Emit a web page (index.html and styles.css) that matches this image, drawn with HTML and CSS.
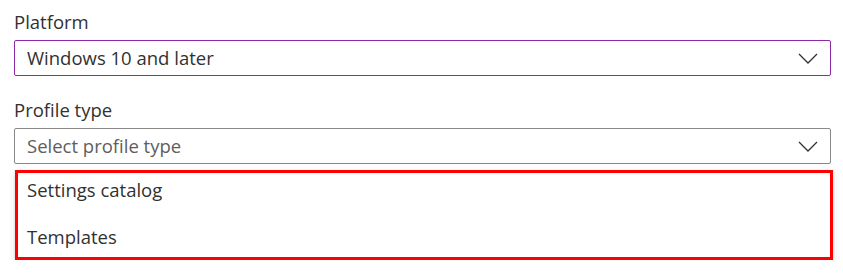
FILE: index.html
```html
<!DOCTYPE html>
<html lang="en">
<head>
<meta charset="utf-8">
<title>Profile</title>
<link rel="stylesheet" href="styles.css">
</head>
<body>
<div class="form">
  <div class="field">
    <div class="label">Platform</div>
    <div class="select select-focused">
      <span class="value">Windows 10 and later</span>
      <svg class="chevron" width="20" height="11" viewBox="0 0 20 11"><path d="M1 1 L10 10 L19 1" fill="none" stroke="#323130" stroke-width="1.3"/></svg>
    </div>
  </div>
  <div class="field field-second">
    <div class="label">Profile type</div>
    <div class="select">
      <span class="value placeholder">Select profile type</span>
      <svg class="chevron" width="20" height="11" viewBox="0 0 20 11"><path d="M1 1 L10 10 L19 1" fill="none" stroke="#323130" stroke-width="1.3"/></svg>
    </div>
    <div class="menu">
      <div class="item">Settings catalog</div>
      <div class="item">Templates</div>
    </div>
  </div>
</div>
</body>
</html>
```
FILE: styles.css
```css
html, body {
  margin: 0;
  padding: 0;
  background: #ffffff;
}
body {
  font-family: "Open Sans", "Noto Sans", sans-serif;
  font-size: 18.5px;
  color: #323130;
}
.form {
  padding: 8px 12px 0 14px;
  width: 817px;
}
.label {
  line-height: 28px;
  height: 28px;
  margin-bottom: 4px;
  color: #323130;
}
.field-second {
  margin-top: 20px;
}
.select {
  box-sizing: border-box;
  height: 36px;
  border: 1px solid #8a8886;
  border-radius: 2px;
  display: flex;
  align-items: center;
  justify-content: space-between;
  padding: 0 12px 0 12px;
}
.select-focused {
  border-color: #8e2aa8;
}
.value {
  line-height: 34px;
}
.placeholder {
  color: #605e5c;
}
.chevron {
  display: block;
}
.menu {
  box-sizing: border-box;
  margin-top: 6px;
  margin-left: 1px;
  width: 818px;
  height: 90px;
  border: 3px solid #ff0000;
  background: #ffffff;
  box-shadow: 0 3.2px 7.2px rgba(0, 0, 0, 0.13), 0 0.6px 1.8px rgba(0, 0, 0, 0.11);
  display: flex;
  flex-direction: column;
  gap: 13px;
  padding: 0 0 0 9px;
}
.item {
  line-height: 34px;
  height: 34px;
}
```
